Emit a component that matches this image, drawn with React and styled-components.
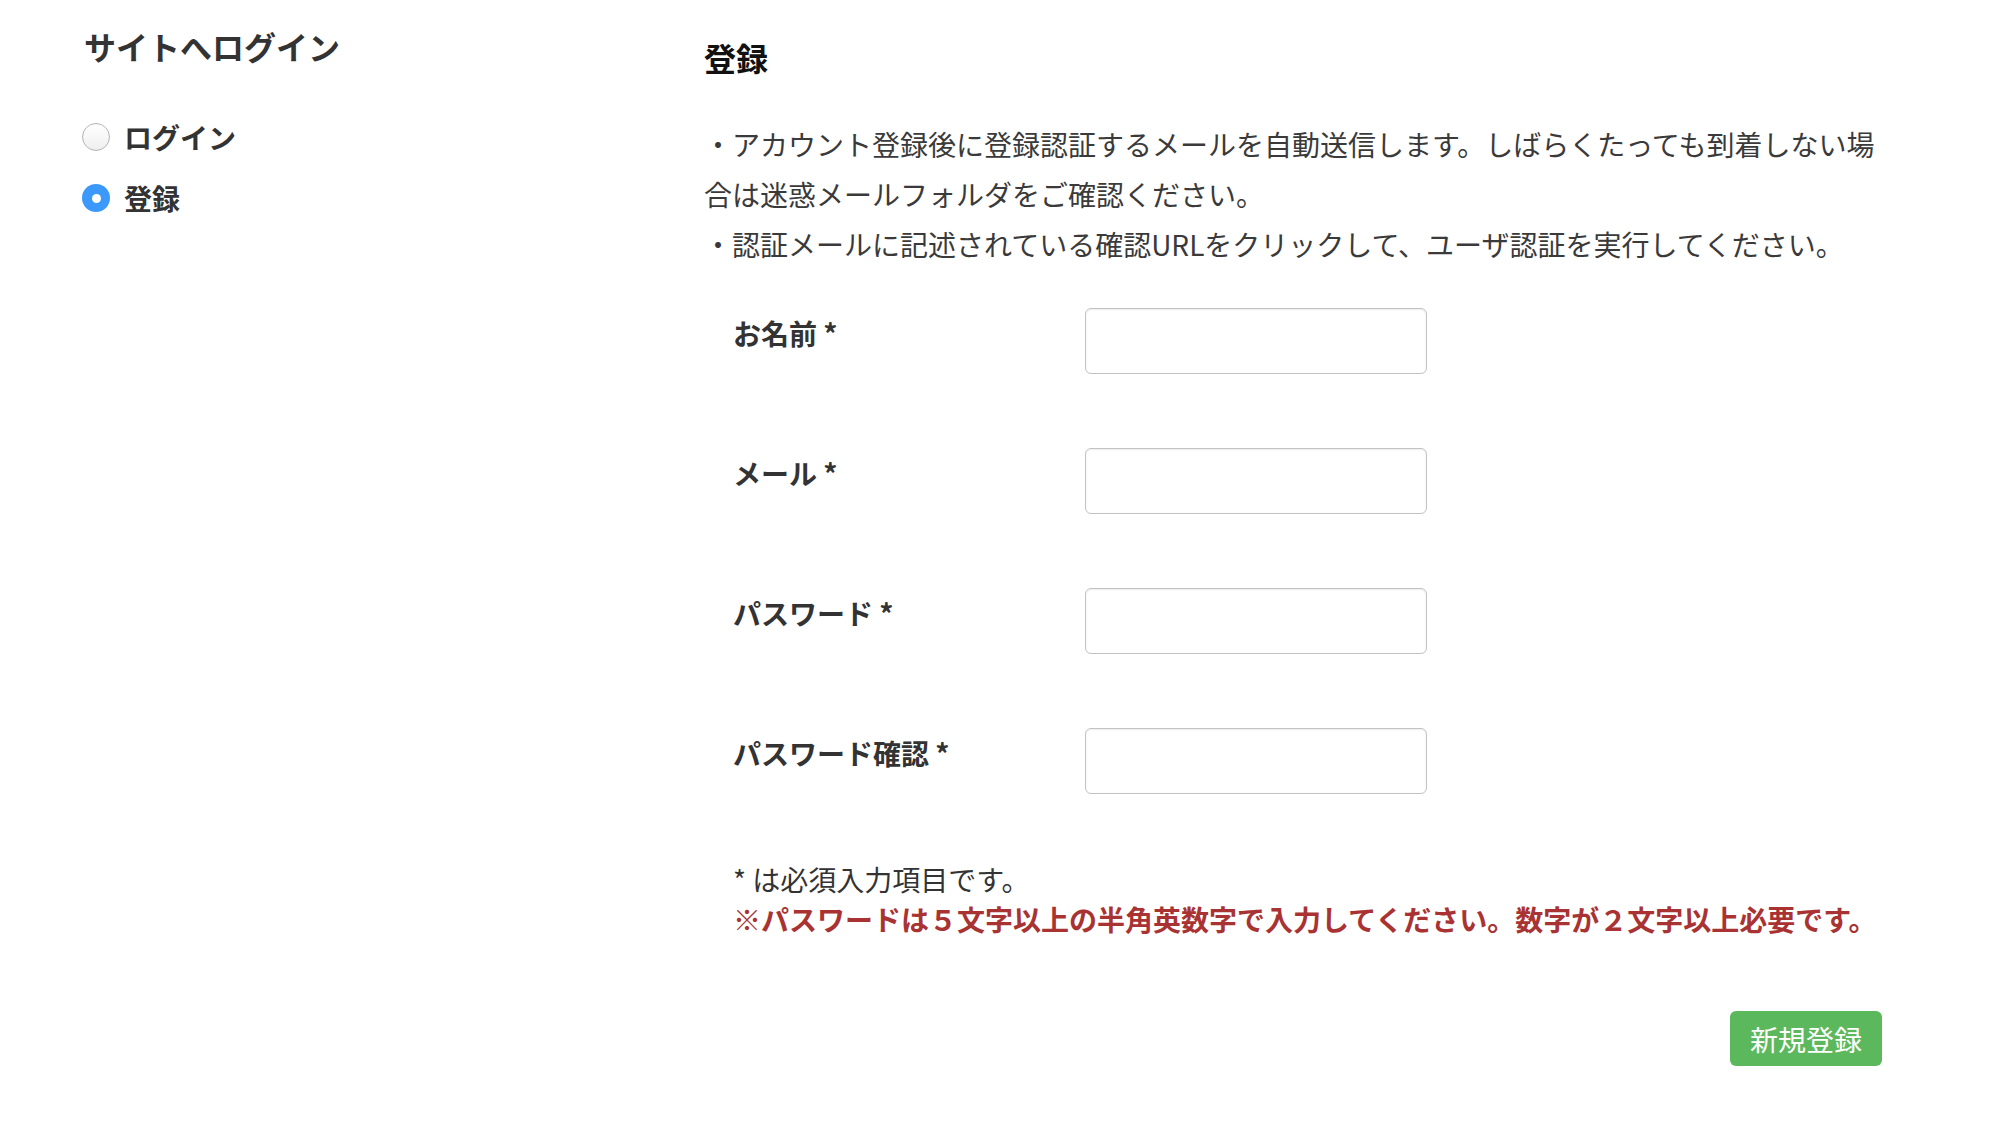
import React, { useState } from 'react';
import styled, { createGlobalStyle } from 'styled-components';

const textDark = "#333333";
const textRed = "#a93333";
const green = "#5cb85c";
const blue = "#3b99fc";

const GlobalStyle = createGlobalStyle`
  body {
    margin: 0;
    background: #ffffff;
    font-family: "Noto Sans CJK JP", "Noto Sans", sans-serif;
    color: ${textDark};
  }
`;

const Page = styled.div`
  display: flex;
  padding: 0 84px;
`;

const Side = styled.aside`
  width: 620px;
  flex-shrink: 0;
  padding-top: 24px;
`;

const SideTitle = styled.h2`
  margin: 0 0 48px;
  font-size: 32px;
  line-height: 45px;
  font-weight: 700;
  color: ${textDark};
`;

const RadioList = styled.div`
  display: flex;
  flex-direction: column;
  gap: 21px;
`;

const RadioRow = styled.label`
  display: flex;
  align-items: center;
  gap: 14px;
  height: 40px;
  font-size: 28px;
  font-weight: 700;
  cursor: pointer;
`;

const Radio = styled.input`
  appearance: none;
  margin: 0 0 0 -2px;
  width: 28px;
  height: 28px;
  border-radius: 50%;
  box-sizing: border-box;
  border: 1.5px solid #b3b3b3;
  background: linear-gradient(#ffffff, #efefef);
  position: relative;
  cursor: pointer;

  &:checked {
    border: none;
    background: ${blue};
  }

  &:checked::after {
    content: "";
    position: absolute;
    left: 50%;
    top: 50%;
    width: 9px;
    height: 9px;
    margin: -4.5px 0 0 -4.5px;
    border-radius: 50%;
    background: #ffffff;
  }
`;

const Main = styled.main`
  width: 1178px;
  flex-shrink: 0;
  padding-top: 35px;
`;

const Title = styled.h1`
  margin: 0 0 39px;
  font-size: 32px;
  line-height: 45px;
  font-weight: 700;
  color: #111111;
`;

const Notice = styled.p`
  margin: 0 0 39px;
  font-size: 28px;
  line-height: 50px;
  color: #3a3a3a;
`;

const Form = styled.form`
  display: flex;
  flex-direction: column;
  gap: 74px;
  padding-left: 29px;
`;

const Field = styled.div`
  display: grid;
  grid-template-columns: 352px 342px;
  align-items: start;
`;

const Label = styled.label`
  padding-top: 5px;
  font-size: 28px;
  line-height: 40px;
  font-weight: 700;
  color: ${textDark};
`;

const Input = styled.input`
  box-sizing: border-box;
  height: 66px;
  width: 342px;
  border: 1.5px solid #c2c2c2;
  border-radius: 6px;
  box-shadow: inset 0 1px 2px rgba(0, 0, 0, 0.08);
  padding: 0 14px;
  font-size: 26px;
  font-family: inherit;
  outline: none;
`;

const Notes = styled.div`
  margin-top: -9px;
  font-size: 28px;
  line-height: 40px;
`;

const Note = styled.div`
  color: ${p => (p.$warn ? textRed : textDark)};
  font-weight: ${p => (p.$warn ? 700 : 400)};
  white-space: nowrap;
`;

const Actions = styled.div`
  display: flex;
  justify-content: flex-end;
  margin-top: 72px;
  padding-bottom: 40px;
`;

const SubmitButton = styled.button`
  height: 55px;
  padding: 0 20px;
  border: none;
  border-radius: 6px;
  background: ${green};
  color: #ffffff;
  font-family: inherit;
  font-size: 28px;
  cursor: pointer;
`;

const fields = [
  { id: "name", label: "お名前 *", type: "text" },
  { id: "email", label: "メール *", type: "email" },
  { id: "password", label: "パスワード *", type: "password" },
  { id: "confirm", label: "パスワード確認 *", type: "password" },
];

function App() {
  const [mode, setMode] = useState("register");

  return (
    <>
      <GlobalStyle />
      <Page>
        <Side>
          <SideTitle>サイトへログイン</SideTitle>
          <RadioList>
            <RadioRow>
              <Radio type="radio" name="mode" checked={mode === "login"} onChange={() => setMode("login")} />
              ログイン
            </RadioRow>
            <RadioRow>
              <Radio type="radio" name="mode" checked={mode === "register"} onChange={() => setMode("register")} />
              登録
            </RadioRow>
          </RadioList>
        </Side>
        <Main>
          <Title>登録</Title>
          <Notice>
            ・アカウント登録後に登録認証するメールを自動送信します。しばらくたっても到着しない場合は迷惑メールフォルダをご確認ください。
            <br />
            ・認証メールに記述されている確認URLをクリックして、ユーザ認証を実行してください。
          </Notice>
          <Form onSubmit={e => e.preventDefault()}>
            {fields.map(f => (
              <Field key={f.id}>
                <Label htmlFor={f.id}>{f.label}</Label>
                <Input id={f.id} type={f.type} />
              </Field>
            ))}
            <Notes>
              <Note>* は必須入力項目です。</Note>
              <Note $warn>※パスワードは５文字以上の半角英数字で入力してください。数字が２文字以上必要です。</Note>
            </Notes>
          </Form>
          <Actions>
            <SubmitButton type="submit">新規登録</SubmitButton>
          </Actions>
        </Main>
      </Page>
    </>
  );
}

export default App;
